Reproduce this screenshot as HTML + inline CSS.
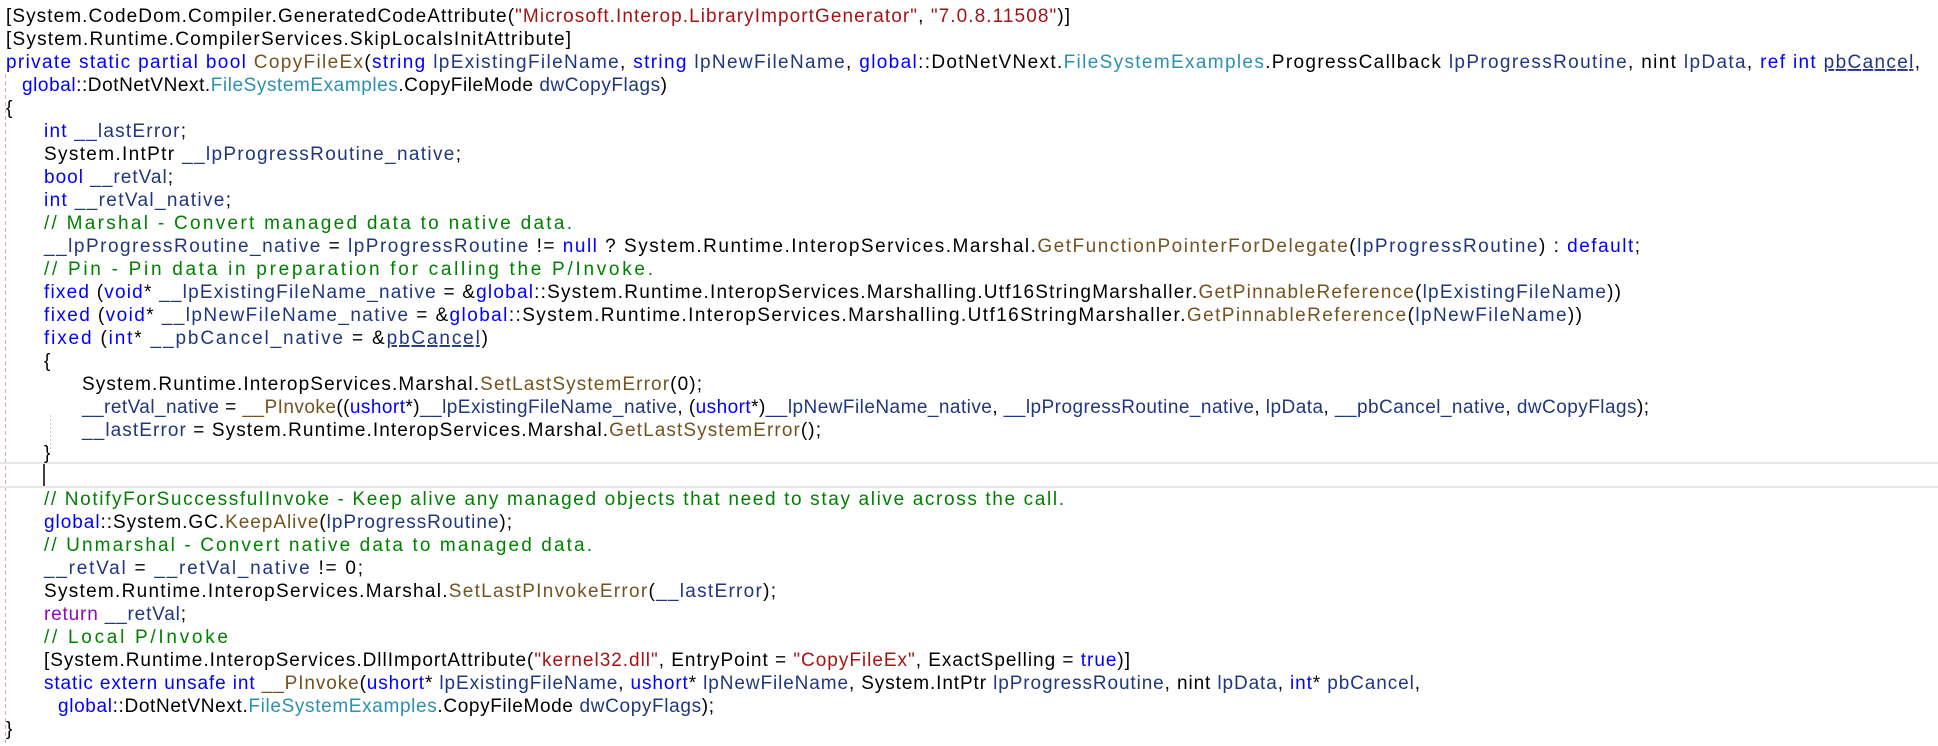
<!DOCTYPE html>
<html><head><meta charset="utf-8"><style>
html,body{margin:0;padding:0;background:#fff;width:1938px;height:746px;overflow:hidden}
svg text{font-family:"Liberation Sans",sans-serif;font-size:19px;fill:#000;white-space:pre}
.k{fill:#0000ff}.t{fill:#2b91af}.s{fill:#a31515}.c{fill:#008000}.m{fill:#74531f}.p{fill:#1f377f}.r{fill:#8f08c4}
</style></head><body>
<svg width="1938" height="746" xmlns="http://www.w3.org/2000/svg" xml:space="preserve">
<line x1="5.5" y1="74" x2="5.5" y2="746" stroke="#e8a0a0" stroke-dasharray="4,3" stroke-width="1"/>
<line x1="50.5" y1="415" x2="50.5" y2="450" stroke="#c8c8d8" stroke-dasharray="2,2"/>
<line x1="0" y1="463" x2="1938" y2="463" stroke="#e6e6e6" stroke-width="2"/>
<line x1="0" y1="487" x2="1938" y2="487" stroke="#e6e6e6" stroke-width="2"/>
<line x1="44" y1="464" x2="44" y2="486" stroke="#000" stroke-width="1.5"/>

<text x="6" y="22" textLength="1064" lengthAdjust="spacing">[System.CodeDom.Compiler.GeneratedCodeAttribute(<tspan class="s">"Microsoft.Interop.LibraryImportGenerator"</tspan>, <tspan class="s">"7.0.8.11508"</tspan>)]</text>
<text x="6" y="45" textLength="565" lengthAdjust="spacing">[System.Runtime.CompilerServices.SkipLocalsInitAttribute]</text>
<text x="6" y="68" textLength="1914" lengthAdjust="spacing"><tspan class="k">private static partial bool</tspan> <tspan class="m">CopyFileEx</tspan>(<tspan class="k">string</tspan> <tspan class="p">lpExistingFileName</tspan>, <tspan class="k">string</tspan> <tspan class="p">lpNewFileName</tspan>, <tspan class="k">global</tspan>::DotNetVNext.<tspan class="t">FileSystemExamples</tspan>.ProgressCallback <tspan class="p">lpProgressRoutine</tspan>, nint <tspan class="p">lpData</tspan>, <tspan class="k">ref int</tspan> <tspan class="p" text-decoration="underline">pbCancel</tspan>,</text>
<text x="22" y="91" textLength="645" lengthAdjust="spacing"><tspan class="k">global</tspan>::DotNetVNext.<tspan class="t">FileSystemExamples</tspan>.CopyFileMode <tspan class="p">dwCopyFlags</tspan>)</text>
<text x="6" y="114">{</text>
<text x="44" y="137" textLength="142" lengthAdjust="spacing"><tspan class="k">int</tspan> <tspan class="p">__lastError</tspan>;</text>
<text x="44" y="160" textLength="417" lengthAdjust="spacing">System.IntPtr <tspan class="p">__lpProgressRoutine_native</tspan>;</text>
<text x="44" y="183" textLength="129" lengthAdjust="spacing"><tspan class="k">bool</tspan> <tspan class="p">__retVal</tspan>;</text>
<text x="44" y="206" textLength="187" lengthAdjust="spacing"><tspan class="k">int</tspan> <tspan class="p">__retVal_native</tspan>;</text>
<text x="44" y="229" textLength="528" lengthAdjust="spacing" class="c">// Marshal - Convert managed data to native data.</text>
<text x="44" y="252" textLength="1596" lengthAdjust="spacing"><tspan class="p">__lpProgressRoutine_native</tspan> = <tspan class="p">lpProgressRoutine</tspan> != <tspan class="k">null</tspan> ? System.Runtime.InteropServices.Marshal.<tspan class="m">GetFunctionPointerForDelegate</tspan>(<tspan class="p">lpProgressRoutine</tspan>) : <tspan class="k">default</tspan>;</text>
<text x="44" y="275" textLength="609" lengthAdjust="spacing" class="c">// Pin - Pin data in preparation for calling the P/Invoke.</text>
<text x="44" y="298" textLength="1577" lengthAdjust="spacing"><tspan class="k">fixed</tspan> (<tspan class="k">void</tspan>* <tspan class="p">__lpExistingFileName_native</tspan> = &amp;<tspan class="k">global</tspan>::System.Runtime.InteropServices.Marshalling.Utf16StringMarshaller.<tspan class="m">GetPinnableReference</tspan>(<tspan class="p">lpExistingFileName</tspan>))</text>
<text x="44" y="321" textLength="1538" lengthAdjust="spacing"><tspan class="k">fixed</tspan> (<tspan class="k">void</tspan>* <tspan class="p">__lpNewFileName_native</tspan> = &amp;<tspan class="k">global</tspan>::System.Runtime.InteropServices.Marshalling.Utf16StringMarshaller.<tspan class="m">GetPinnableReference</tspan>(<tspan class="p">lpNewFileName</tspan>))</text>
<text x="44" y="344" textLength="444" lengthAdjust="spacing"><tspan class="k">fixed</tspan> (<tspan class="k">int</tspan>* <tspan class="p">__pbCancel_native</tspan> = &amp;<tspan class="p" text-decoration="underline">pbCancel</tspan>)</text>
<text x="44" y="367">{</text>
<text x="82" y="390" textLength="620" lengthAdjust="spacing">System.Runtime.InteropServices.Marshal.<tspan class="m">SetLastSystemError</tspan>(0);</text>
<text x="82" y="413" textLength="1567" lengthAdjust="spacing"><tspan class="p">__retVal_native</tspan> = <tspan class="m">__PInvoke</tspan>((<tspan class="k">ushort</tspan>*)<tspan class="p">__lpExistingFileName_native</tspan>, (<tspan class="k">ushort</tspan>*)<tspan class="p">__lpNewFileName_native</tspan>, <tspan class="p">__lpProgressRoutine_native</tspan>, <tspan class="p">lpData</tspan>, <tspan class="p">__pbCancel_native</tspan>, <tspan class="p">dwCopyFlags</tspan>);</text>
<text x="82" y="436" textLength="739" lengthAdjust="spacing"><tspan class="p">__lastError</tspan> = System.Runtime.InteropServices.Marshal.<tspan class="m">GetLastSystemError</tspan>();</text>
<text x="44" y="459">}</text>
<text x="44" y="505" textLength="1020" lengthAdjust="spacing" class="c">// NotifyForSuccessfulInvoke - Keep alive any managed objects that need to stay alive across the call.</text>
<text x="44" y="528" textLength="468" lengthAdjust="spacing"><tspan class="k">global</tspan>::System.GC.<tspan class="m">KeepAlive</tspan>(<tspan class="p">lpProgressRoutine</tspan>);</text>
<text x="44" y="551" textLength="548" lengthAdjust="spacing" class="c">// Unmarshal - Convert native data to managed data.</text>
<text x="44" y="574" textLength="319" lengthAdjust="spacing"><tspan class="p">__retVal</tspan> = <tspan class="p">__retVal_native</tspan> != 0;</text>
<text x="44" y="597" textLength="732" lengthAdjust="spacing">System.Runtime.InteropServices.Marshal.<tspan class="m">SetLastPInvokeError</tspan>(<tspan class="p">__lastError</tspan>);</text>
<text x="44" y="620" textLength="142" lengthAdjust="spacing"><tspan class="r">return</tspan> <tspan class="p">__retVal</tspan>;</text>
<text x="44" y="643" textLength="184" lengthAdjust="spacing" class="c">// Local P/Invoke</text>
<text x="44" y="666" textLength="1086" lengthAdjust="spacing">[System.Runtime.InteropServices.DllImportAttribute(<tspan class="s">"kernel32.dll"</tspan>, EntryPoint = <tspan class="s">"CopyFileEx"</tspan>, ExactSpelling = <tspan class="k">true</tspan>)]</text>
<text x="44" y="689" textLength="1376" lengthAdjust="spacing"><tspan class="k">static extern unsafe int</tspan> <tspan class="m">__PInvoke</tspan>(<tspan class="k">ushort</tspan>* <tspan class="p">lpExistingFileName</tspan>, <tspan class="k">ushort</tspan>* <tspan class="p">lpNewFileName</tspan>, System.IntPtr <tspan class="p">lpProgressRoutine</tspan>, nint <tspan class="p">lpData</tspan>, <tspan class="k">int</tspan>* <tspan class="p">pbCancel</tspan>,</text>
<text x="58" y="712" textLength="656" lengthAdjust="spacing"><tspan class="k">global</tspan>::DotNetVNext.<tspan class="t">FileSystemExamples</tspan>.CopyFileMode <tspan class="p">dwCopyFlags</tspan>);</text>
<text x="6" y="735">}</text>
</svg>
</body></html>
